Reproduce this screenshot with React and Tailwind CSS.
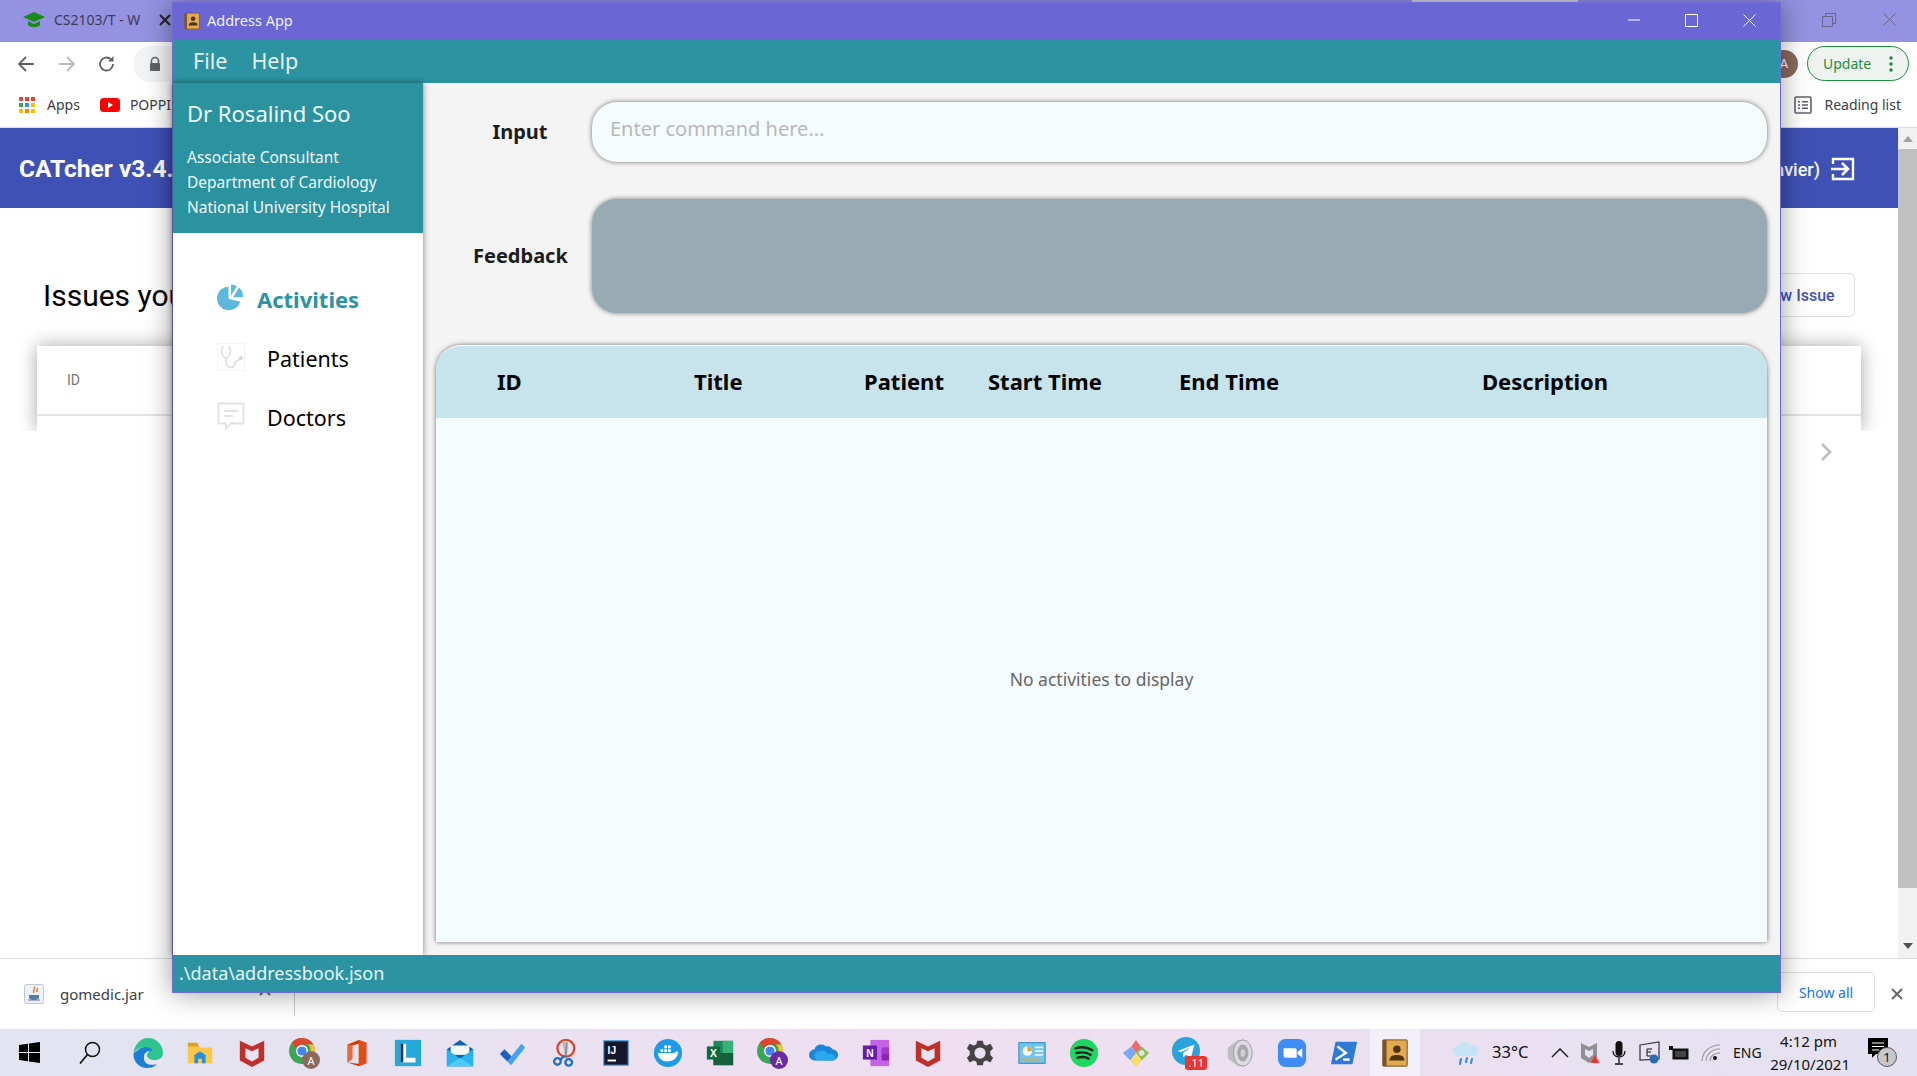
const SEGOE = "font-['Noto_Sans',sans-serif]";

function Svg({ s = 30, v = 32, children, className = "" }) {
  return (
    <svg width={s} height={s} viewBox={`0 0 ${v} ${v}`} className={className}>
      {children}
    </svg>
  );
}

const McAfee = ({ s = 30 }) => (
  <Svg s={s}>
    <path d="M3 3l13 6 13-6v21l-13 7-13-7z" fill="#c0302b" />
    <path d="M9 11l7 3 7-3v10l-7 4-7-4z" fill="#e6e4f0" />
  </Svg>
);

const ChromeA = ({ badge = "#8a6a5d", s = 34 }) => (
  <Svg s={s} v={34}>
    <circle cx="15" cy="15" r="13" fill="#3aa757" />
    <path d="M15 2a13 13 0 0 1 11.3 6.5H15a6.5 6.5 0 0 0-6 4L4.5 6.8A13 13 0 0 1 15 2z" fill="#e0452f" />
    <path d="M26.3 8.5A13 13 0 0 1 16 28l5-9a6.5 6.5 0 0 0 0-10.5z" fill="#fbc02d" />
    <circle cx="15" cy="15" r="6" fill="#fff" />
    <circle cx="15" cy="15" r="4.6" fill="#4285f4" />
    <circle cx="24" cy="24" r="9" fill={badge} />
    <text x="24" y="28.5" textAnchor="middle" fontSize="11" fill="#fff" fontFamily="Noto Sans">A</text>
  </Svg>
);

const taskIcons = [
  <Svg key="ex"><path d="M3 7h11l2 3h13v17H3z" fill="#fbc84a" /><path d="M3 5h10l2 4H3z" fill="#e0a021" /><path d="M10 27v-9l6-4 6 4v9h-4v-5h-4v5z" fill="#2a8fd8" /></Svg>,
  <McAfee key="mc" />,
  <ChromeA key="ch" />,
  <Svg key="of"><path d="M19 2l8 3v22l-8 3-12-4 12 1.5V6l-7 2v14l-5 4V7z" fill="#d83b01" /><path d="M7 7l5 1v14l-5 4z" fill="#eb6a3c" /><path d="M19 2l8 3v22l-8 3z" fill="#e04e17" /></Svg>,
  <Svg key="l"><rect x="2" y="2" width="28" height="28" fill="#25a9d8" /><path d="M8 6h6v15h10v5H8z" fill="#fff" /><path d="M8 6h3v20H8z" fill="#123a6b" /></Svg>,
  <Svg key="ml"><path d="M2 12L16 2l14 10v18H2z" fill="#0f64ad" /><path d="M6 8h20v10H6z" fill="#f4f8fb" /><path d="M2 12l14 10 14-10v18H2z" fill="#27b4ef" /><path d="M2 30l14-9 14 9z" fill="#4fcaf5" /></Svg>,
  <Svg key="td"><path d="M3 17l5-5 8 8-5 5z" fill="#1f5fbf" /><path d="M11 25L26 6l4 4-15 19z" fill="#43a3ee" /></Svg>,
  <Svg key="sn"><circle cx="18" cy="11" r="9" fill="none" stroke="#d9482b" strokeWidth="2.5" /><path d="M17 3l2 15-2 1-3-15z" fill="#b9b9b9" /><path d="M20 5l-1 14-2-1 1-14z" fill="#8a8a8a" /><circle cx="9" cy="25" r="3.5" fill="none" stroke="#1f6fc2" strokeWidth="2.5" /><circle cx="21" cy="26" r="3.5" fill="none" stroke="#1f6fc2" strokeWidth="2.5" /><path d="M11 22l5-4 2 1-5 5z" fill="#1f6fc2" /></Svg>,
  <Svg key="ij"><rect x="3" y="3" width="26" height="26" fill="#18162b" stroke="#3ea0dd" strokeWidth="1.2" /><text x="7" y="17" fontSize="11" fontWeight="700" fill="#fff" fontFamily="Liberation Sans">IJ</text><rect x="7" y="23" width="9" height="2" fill="#fff" /></Svg>,
  <Svg key="dk"><circle cx="16" cy="16" r="15" fill="#1d9be6" /><path d="M5 16h18c1-2 3-2 4-1-1 7-6 10-12 10-5 0-9-3-10-9z" fill="#fff" /><path d="M8 12h3v3H8zm4 0h3v3h-3zm4 0h3v3h-3zm-4-4h3v3h-3zm4 0h3v3h-3z" fill="#fff" /></Svg>,
  <Svg key="xl"><rect x="9" y="3" width="21" height="26" fill="#1f8a57" /><rect x="19" y="3" width="11" height="13" fill="#37b37a" /><rect x="9" y="16" width="21" height="13" fill="#155f3c" /><rect x="2" y="9" width="14" height="14" fill="#0f6b3a" /><text x="9" y="20" textAnchor="middle" fontSize="11" fontWeight="700" fill="#fff" fontFamily="Liberation Sans">X</text></Svg>,
  <ChromeA key="ch2" badge="#6a2aa6" />,
  <Svg key="od"><path d="M6 24a6 6 0 0 1 0-12c1-5 8-7 12-3 3-1 6 1 7 3a6 6 0 0 1 0 12z" fill="#1a86d9" /><path d="M10 24a5 5 0 0 1 2-10c3-1 6 0 8 3 4-1 9 1 8 5 0 1-1 2-3 2z" fill="#2ca7ec" /></Svg>,
  <Svg key="on"><rect x="10" y="2" width="20" height="28" fill="#c363e6" /><rect x="22" y="10" width="8" height="7" fill="#a23bcd" /><rect x="22" y="17" width="8" height="7" fill="#8a26b3" /><rect x="2" y="8" width="15" height="15" fill="#6a1ba6" /><text x="9.5" y="20" textAnchor="middle" fontSize="11" fontWeight="700" fill="#fff" fontFamily="Liberation Sans">N</text></Svg>,
  <McAfee key="mc2" />,
  <Svg key="gr"><path d="M13 3h6l1 4 3 1 4-2 3 5-3 3v4l3 3-3 5-4-2-3 1-1 4h-6l-1-4-3-1-4 2-3-5 3-3v-4l-3-3 3-5 4 2 3-1z" fill="#444" /><circle cx="16" cy="16" r="6" fill="#e8e0f0" /></Svg>,
  <Svg key="cp"><rect x="2" y="5" width="28" height="22" fill="#6ec6f0" stroke="#2b7fb8" /><circle cx="11" cy="14" r="5" fill="#fff" /><path d="M11 9a5 5 0 0 1 5 5h-5z" fill="#e9a33a" /><path d="M19 9h9v2h-9zm0 4h9v2h-9zm0 4h9v2h-9z" fill="#e8f6fc" /><rect x="5" y="22" width="20" height="2" fill="#e9a33a" /></Svg>,
  <Svg key="sp"><circle cx="16" cy="16" r="15" fill="#1ed760" /><path d="M7 11c6-2 13-1 18 2M8 16c5-1 11-1 15 2M9 21c4-1 9-1 12 1" stroke="#222" strokeWidth="2.6" fill="none" strokeLinecap="round" /></Svg>,
  <Svg key="gt"><path d="M16 2l6 9-6 5-5-7z" fill="#ef6a6a" /><path d="M2 16l9-7 5 7-6 8z" fill="#7aa9f5" /><path d="M22 9l8 7-8 8-6-8z" fill="#8cc152" /><path d="M10 24l6-8 6 8-6 7z" fill="#fbdc68" /><circle cx="22" cy="16" r="3" fill="#e8e0f0" /></Svg>,
  <div key="tg" className="relative w-[34px] h-[34px]">
    <Svg s={30}><circle cx="16" cy="16" r="15" fill="#2aa3dc" /><path d="M7 16l18-7-4 15-5-4-3 3v-5l8-6-10 5z" fill="#fff" /></Svg>
    <span className="absolute right-[-2px] bottom-0 bg-[#e8372f] text-white text-[11px] leading-[14px] px-[3px] rounded-[3px] font-['Noto_Sans',sans-serif]">.11</span>
  </div>,
  <Svg key="sd"><path d="M3 10l11-8h5v28h-5L3 22z" fill="#bdbdc2" /><ellipse cx="19" cy="16" rx="10" ry="14" fill="#dcdce0" stroke="#9a9a9e" /><ellipse cx="19" cy="16" rx="6" ry="9" fill="#a8a8ac" /><ellipse cx="19" cy="16" rx="2.5" ry="4" fill="#d0d0d4" /></Svg>,
  <Svg key="zm"><rect x="1" y="1" width="30" height="30" rx="8" fill="#3f8cf5" /><path d="M7 11h12a2 2 0 0 1 2 2v8H9a2 2 0 0 1-2-2z" fill="#fff" /><path d="M22 15l5-4v10l-5-4z" fill="#fff" /></Svg>,
  <Svg key="ps"><path d="M7 4h23l-5 24H2z" fill="#2f7ad6" /><path d="M9 9l9 7-11 7" fill="none" stroke="#fff" strokeWidth="2.5" /><path d="M15 23h7" stroke="#fff" strokeWidth="2.5" /></Svg>,
];

function AddressBook({ s = 28 }) {
  return (
    <Svg s={s}>
      <rect x="3" y="2" width="26" height="28" rx="1" fill="#e3a94f" stroke="#6d4a1e" />
      <rect x="3" y="2" width="4" height="28" fill="#7a5426" />
      <circle cx="18" cy="12" r="4" fill="#4d3413" />
      <path d="M10 24c0-5 4-6 8-6s8 1 8 6z" fill="#4d3413" />
    </Svg>
  );
}

function Pie({ s }) {
  return (
    <svg width={s} height={s} viewBox="0 0 28 28">
      <path d="M11.5 3.500v12.200l11.800 3A11.900 11.900 0 1 1 11.500 3.500z" fill="#5cb8dc" />
      <path d="M14 1.500a12 12 0 0 1 6 1.800l-6 9.200z" fill="#5cb8dc" />
      <path d="M22 4.600a12 12 0 0 1 4 9.500l-10 .3z" fill="#5cb8dc" />
    </svg>
  );
}

function AppWindow() {
  return (
    <div className={`absolute left-[172px] top-[2px] w-[1609px] h-[991px] flex flex-col border border-[#6f6cd8] bg-[#f4f4f4] shadow-[0_0_26px_rgba(0,0,0,0.4)] ${SEGOE}`}>
      <div className="h-[36px] bg-[#6a67d4] flex items-center pl-[10px] text-white shrink-0">
        <AddressBook s={18} />
        <span className="ml-[6px] text-[14.5px] text-[#f0f0ff]">Address App</span>
        <div className="ml-auto flex items-center mt-[-2px]">
          <svg width="14" height="14" viewBox="0 0 14 14" className="mr-[44px]"><path d="M1 7h12" stroke="#fff" /></svg>
          <svg width="13" height="13" viewBox="0 0 13 13" className="mr-[45px]"><rect x=".5" y=".5" width="12" height="12" fill="none" stroke="#fff" /></svg>
          <svg width="13" height="13" viewBox="0 0 13 13" className="mr-[24px]"><path d="M.5.5l12 12M12.5.5l-12 12" stroke="#fff" /></svg>
        </div>
      </div>
      <div className="h-[44px] bg-[#2b93a1] flex items-center pl-[20px] gap-[24px] text-[21.5px] text-[#e6f5f5] shrink-0">
        <span>File</span>
        <span>Help</span>
      </div>
      <div className="flex-1 flex min-h-0">
        <div className="w-[250px] shrink-0 bg-white shadow-[0_0_6px_rgba(0,0,0,0.5)] flex flex-col z-10">
          <div className="h-[150px] bg-[#2b92a0] pl-[14px] pr-[10px] pt-[14px] text-[#eef9f9]">
            <div className="text-[22px] leading-[32px]">Dr Rosalind Soo</div>
            <div className="mt-[16px] text-[15.5px] leading-[25px]">
              <div>Associate Consultant</div>
              <div>Department of Cardiology</div>
              <div>National University Hospital</div>
            </div>
          </div>
          <div className="flex flex-col pt-[50px] pl-[44px]">
            <div className="h-[60px] flex items-start">
              <Pie s={28} />
              <span className="ml-[12px] text-[22px] leading-[32px] font-bold text-[#2b93a1] whitespace-nowrap">Activities</span>
            </div>
            <div className="h-[59px] flex items-start">
              <svg width="28" height="28" viewBox="0 0 28 28">
                <rect x=".5" y=".5" width="27" height="27" fill="none" stroke="#f4f4f4" />
                <path d="M6 3C3 8 5 14 9 15c4-1 6-7 3-12M9 15v5c0 5 8 6 9 1v-2l5-3" fill="none" stroke="#e0e0e0" strokeWidth="1.6" />
                <circle cx="24" cy="15" r="2" fill="#d8d8d8" />
              </svg>
              <span className="ml-[22px] text-[21.5px] leading-[32px] text-black">Patients</span>
            </div>
            <div className="h-[59px] flex items-start">
              <svg width="28" height="28" viewBox="0 0 28 28">
                <path d="M1.5 1.5h25v20H14l-5 5v-5H1.5z" fill="none" stroke="#e2e2e2" strokeWidth="1.8" />
                <path d="M7 9h14M7 14h9" stroke="#e2e2e2" strokeWidth="2" />
              </svg>
              <span className="ml-[22px] text-[21.5px] leading-[32px] text-black">Doctors</span>
            </div>
          </div>
        </div>
        <div className="flex-1 flex flex-col min-w-0 pt-[19px] pl-[13px] pr-[13px] pb-[13px]">
          <div className="h-[60px] flex items-center shrink-0">
            <div className="w-[156px] pl-[12px] text-center font-bold text-[20px] text-[#1c1c1c]">Input</div>
            <div className="flex-1 h-full rounded-[25px] bg-[#f4fcfe] shadow-[0_0_5px_rgba(0,0,0,0.55)] pl-[18px] pt-[12px] text-[20px] leading-[30px] text-[#b9b9b9]">
              Enter command here...
            </div>
          </div>
          <div className="h-[114px] mt-[37px] flex items-center shrink-0">
            <div className="w-[156px] pl-[37px] whitespace-nowrap font-bold text-[20px] text-[#1c1c1c]">Feedback</div>
            <div className="flex-1 h-full rounded-[25px] bg-[#98aab3] shadow-[0_0_5px_rgba(0,0,0,0.5)]" />
          </div>
          <div className="mt-[32px] flex-1 flex flex-col rounded-tl-[25px] rounded-tr-[25px] bg-[#f4fcfe] shadow-[0_0_5px_rgba(0,0,0,0.55)] overflow-hidden border-t-[1px] border-white">
            <div className="h-[72px] shrink-0 bg-[#c7e3ec] grid grid-cols-[197px_170px_124px_191px_303px_1fr] items-center pl-[61px] pb-[2px] font-bold text-[22px] text-black whitespace-nowrap">
              <span>ID</span>
              <span>Title</span>
              <span>Patient</span>
              <span>Start Time</span>
              <span>End Time</span>
              <span>Description</span>
            </div>
            <div className="flex-1 flex items-center justify-center pb-[2px] text-[17.5px] text-[#666]">No activities to display</div>
          </div>
        </div>
      </div>
      <div className="h-[37px] shrink-0 bg-[#2b93a1] pl-[6px] flex items-center text-[18px] text-[#e6f5f5] z-10">.\data\addressbook.json</div>
    </div>
  );
}

function Browser() {
  return (
    <div className="h-[1029px] flex flex-col font-['Roboto',sans-serif]">
      <div className="h-[42px] shrink-0 bg-[#9492e1] flex items-center relative pb-[3px]">
        <svg width="22" height="16" viewBox="0 0 22 16" className="ml-[23px]"><path d="M11 0l11 5-11 5L0 5z" fill="#178a17" /><path d="M5 9v4c3 3 9 3 12 0V9l-6 3z" fill="#178a17" /></svg>
        <span className="ml-[9px] text-[14px] text-[#3b3b55] w-[100px] whitespace-nowrap font-['Noto_Sans',sans-serif]">CS2103/T - W</span>
        <svg width="12" height="12" viewBox="0 0 12 12" className="ml-[5px]"><path d="M1 1l10 10M11 1L1 11" stroke="#222" strokeWidth="2" /></svg>
        <div className="ml-auto flex items-center pr-[21px]">
          <svg width="14" height="14" viewBox="0 0 14 14" className="mr-[47px]"><path d="M.5 3.5h10v10H.5zM3.5 3.5v-3h10v10h-3" fill="none" stroke="#66668a" /></svg>
          <svg width="13" height="13" viewBox="0 0 13 13"><path d="M.5.5l12 12M12.5.5l-12 12" stroke="#66668a" /></svg>
        </div>
        <div className="absolute top-0 left-[1412px] w-[166px] h-[2px] bg-[#d8d6ea]" />
      </div>
      <div className="h-[43px] shrink-0 bg-white flex items-center text-[#5f6368]">
        <svg width="18" height="18" viewBox="0 0 18 18" className="ml-[17px]"><path d="M17 9H2M9 2L2 9l7 7" fill="none" stroke="#5f6368" strokeWidth="1.8" /></svg>
        <svg width="18" height="18" viewBox="0 0 18 18" className="ml-[23px]"><path d="M1 9h15M9 2l7 7-7 7" fill="none" stroke="#bcbcbc" strokeWidth="1.8" /></svg>
        <svg width="18" height="18" viewBox="0 0 18 18" className="ml-[22px]"><path d="M15 9a6.500 6.500 0 1 1-2-4.700" fill="none" stroke="#5f6368" strokeWidth="1.800" /><path d="M15.500 1v5.500H10z" fill="#5f6368" /></svg>
        <div className="ml-[17px] w-[200px] h-[36px] rounded-full bg-[#f1f3f4] flex items-center pl-[15px]">
          <svg width="14" height="16" viewBox="0 0 14 16"><path d="M3.5 7V5a3.5 3.5 0 0 1 7 0v2" fill="none" stroke="#5f6368" strokeWidth="1.6" /><rect x="2" y="7" width="10" height="8" rx="1" fill="#5f6368" /></svg>
        </div>
        <div className="ml-auto flex items-center pr-[8px]">
          <div className="w-[28px] h-[28px] rounded-full bg-[#8a6a5d] text-white text-[13px] flex items-center justify-center">A</div>
          <div className="ml-[9px] w-[102px] h-[35px] rounded-full border border-[#1e8e3e] bg-[#eef3ef] flex items-center pl-[15px] text-[14px] text-[#1e8e3e] font-['Noto_Sans',sans-serif]">
            Update
            <svg width="4" height="16" viewBox="0 0 4 16" className="ml-[18px]"><circle cx="2" cy="2" r="1.8" fill="#1e8e3e" /><circle cx="2" cy="8" r="1.8" fill="#1e8e3e" /><circle cx="2" cy="14" r="1.8" fill="#1e8e3e" /></svg>
          </div>
        </div>
      </div>
      <div className="h-[43px] shrink-0 bg-white border-b border-[#dadada] flex items-center pb-[3px] text-[14px] text-[#3c4043] font-['Noto_Sans',sans-serif]">
        <div className="ml-[19px] grid grid-cols-3 gap-[2px] w-[16px]">
          {["#ea4335", "#ea4335", "#ea4335", "#34a853", "#4285f4", "#fbbc04", "#fbbc04", "#ea8600", "#fbbc04"].map((c, i) => (
            <span key={i} className="h-[4px] w-[4px]" style={{ backgroundColor: c }} />
          ))}
        </div>
        <span className="ml-[12px]">Apps</span>
        <svg width="20" height="14" viewBox="0 0 20 14" className="ml-[20px]"><rect width="20" height="14" rx="3.5" fill="#f00" /><path d="M8 4l5 3-5 3z" fill="#fff" /></svg>
        <span className="ml-[10px]">POPPI</span>
        <svg width="18" height="18" viewBox="0 0 18 18" className="ml-auto"><rect x="1" y="1" width="16" height="16" rx="1" fill="#fff" stroke="#5f6368" strokeWidth="1.6" /><path d="M4 5h2v1.5H4zM8 5h6v1.5H8zM4 8.3h2v1.5H4zM8 8.3h6v1.5H8zM4 11.6h2v1.5H4zM8 11.6h6v1.5H8z" fill="#5f6368" /></svg>
        <span className="ml-[12px] mr-[16px] text-[#3c4043]">Reading list</span>
      </div>
      <div className="flex-1 flex min-h-0">
        <div className="flex-1 flex flex-col min-w-0 bg-white">
          <div className="h-[80px] shrink-0 bg-[#3f51b5] flex items-center px-[19px] pt-[2px] text-white font-medium">
            <span className="text-[24.5px] font-bold">CATcher v3.4.1</span>
            <span className="ml-auto text-[18px]">(Xavier)</span>
            <svg width="26" height="26" viewBox="0 0 26 26" className="ml-[10px] mr-[23px]"><path d="M3 8V3h20v20H3v-5" fill="none" stroke="#fff" strokeWidth="2.4" /><path d="M1 13h16M12 7l6 6-6 6" fill="none" stroke="#fff" strokeWidth="2.6" /></svg>
          </div>
          <div className="h-[65px] shrink-0" />
          <div className="h-[44px] shrink-0 flex items-center pl-[43px] pr-[43px]">
            <span className="text-[30px] text-black">Issues you have posted</span>
            <div className="ml-auto w-[115px] h-full rounded-[5px] border border-[#e0e0e0] flex items-center justify-center pt-[1px] text-[16px] font-medium text-[#3f51b5]">New Issue</div>
          </div>
          <div className="h-[29px] shrink-0" />
          <div className="mx-[37px] h-[85px] shrink-0 bg-white shadow-[0_0_18px_rgba(0,0,0,0.35)]">
            <div className="h-[70px] border-b-2 border-[#e4e4e4] flex items-center pl-[30px] text-[14px] text-[#757575]">ID</div>
          </div>
          <div className="relative flex-1 bg-white">
            <svg width="12" height="20" viewBox="0 0 12 20" className="absolute right-[66px] top-[11px]"><path d="M2 2l8 8-8 8" fill="none" stroke="#bdbdbd" strokeWidth="2.6" /></svg>
          </div>
        </div>
        <div className="w-[19px] shrink-0 bg-[#f1f1f1] flex flex-col">
          <div className="h-[21px] flex items-center justify-center"><svg width="10" height="6" viewBox="0 0 10 6"><path d="M0 6l5-6 5 6z" fill="#a3a3a3" /></svg></div>
          <div className="h-[739px] bg-[#c1c1c1]" />
          <div className="flex-1 flex items-end justify-center pb-[9px]"><svg width="10" height="6" viewBox="0 0 10 6"><path d="M0 0l5 6 5-6z" fill="#505050" /></svg></div>
        </div>
      </div>
      <div className="h-[71px] shrink-0 bg-white border-t border-[#dadada] flex items-center font-['Noto_Sans',sans-serif]">
        <svg width="20" height="20" viewBox="0 0 20 20" className="ml-[24px]"><rect x=".5" y=".5" width="19" height="19" rx="2" fill="#eef1f6" stroke="#bfc6d2" /><path d="M10 3c2 2-2 3 0 6M13 4c1 2-1 2 0 4" stroke="#d86f1c" fill="none" strokeWidth="1.3" /><path d="M5 11h10v3c-2 3-8 3-10 0z" fill="#5a7fa6" /><path d="M4 16h12" stroke="#5a7fa6" /></svg>
        <span className="ml-[16px] text-[15px] text-[#3c4043] w-[150px]">gomedic.jar</span>
        <svg width="12" height="8" viewBox="0 0 12 8" className="ml-[49px] mb-[4px]"><path d="M1 7l5-5 5 5" fill="none" stroke="#5f6368" strokeWidth="1.8" /></svg>
        <div className="ml-[23px] h-[56px] w-px bg-[#c8c8c8] self-start mt-[1px]" />
        <div className="ml-auto w-[98px] h-[40px] rounded-[5px] border border-[#e0e0e0] flex items-center justify-center text-[14px] text-[#1a73e8] mt-[-4px]">Show all</div>
        <svg width="12" height="12" viewBox="0 0 12 12" className="ml-[16px] mr-[14px]"><path d="M1 1l10 10M11 1L1 11" stroke="#666" strokeWidth="2" /></svg>
      </div>
    </div>
  );
}

function Taskbar() {
  return (
    <div className="h-[47px] shrink-0 flex items-center bg-gradient-to-r from-[#e2e4f1] via-[#efdff0] to-[#e4e2f0] font-['Noto_Sans',sans-serif] text-[#111]">
      <div className="w-[58px] flex justify-center">
        <svg width="21" height="21" viewBox="0 0 21 21"><path d="M0 3l9-1.3V10H0zM10 1.5L21 0v10H10zM0 11h9v8.300L0 18zM10 11h11v10l-11-1.500z" fill="#000" /></svg>
      </div>
      <div className="w-[64px] flex justify-center">
        <svg width="22" height="24" viewBox="0 0 22 24"><circle cx="13.500" cy="8.500" r="7" fill="none" stroke="#111" strokeWidth="1.500" /><path d="M8.500 13.500L1 22.500" stroke="#111" strokeWidth="1.700" /></svg>
      </div>
      <div className="w-[52px] flex justify-center">
        <svg width="32" height="32" viewBox="0 0 32 32">
          <path d="M16 1a15 15 0 0 1 15 15c0 5-4 7-8 7-5 0-8-2-8-5 0-2 2-3 2-4 0-3-5-5-9-3C4 13 2 15 1.500 17 2 8 8 1 16 1z" fill="#2fc48d" />
          <path d="M1.500 17C1 25 8 31 15 31c4 0 7-1 10-4-6 2-14 1-13-8 .5-4 5-6 9-5-3-5-11-5-15-1-2 1-4 3-4.500 4z" fill="#1a7fd4" />
        </svg>
      </div>
      {taskIcons.map((ic, i) => (
        <div key={i} className="w-[52px] h-[47px] flex items-center justify-center shrink-0">{ic}</div>
      ))}
      <div className="w-[50px] h-[47px] flex items-center justify-center bg-[#f3eff8] shrink-0"><AddressBook s={30} /></div>
      <div className="ml-[28px] w-[36px] flex justify-center">
        <svg width="30" height="28" viewBox="0 0 30 28"><path d="M7 17a5 5 0 0 1 0-10c2-5 11-5 13-1 5-1 8 3 7 6a5 5 0 0 1-3 5z" fill="#c5e3f5" /><path d="M10 20l-1 5M16 19l-1 4M21 20l-1 4" stroke="#3f8fd0" strokeWidth="2.200" strokeLinecap="round" /></svg>
      </div>
      <span className="ml-[8px] w-[40px] text-[16.5px] whitespace-nowrap">33°C</span>
      <svg width="18" height="10" viewBox="0 0 18 10" className="ml-[19px]"><path d="M1 9l8-8 8 8" fill="none" stroke="#111" strokeWidth="1.300" /></svg>
      <svg width="20" height="22" viewBox="0 0 20 22" className="ml-[11px]"><path d="M1 1l8 4 8-4v15l-8 5-8-5z" fill="#8f8f94" /><path d="M5 7l4 2 4-2v6l-4 3-4-3z" fill="#e4e2f0" /><path d="M15 13l4.500 8h-9z" fill="#e33" /></svg>
      <svg width="14" height="24" viewBox="0 0 14 24" className="ml-[12px]"><rect x="3.500" y="0" width="7" height="15" rx="3.500" fill="#111" /><path d="M1 10c0 8 12 8 12 0M7 17v5M3 23h8" fill="none" stroke="#111" strokeWidth="1.300" /></svg>
      <svg width="22" height="24" viewBox="0 0 22 24" className="ml-[13px]"><path d="M1 4l19-3v17l-19 1z" fill="none" stroke="#333" strokeWidth="1.200" /><path d="M8 8h5M8 8v7h5M8 11h4" stroke="#111" fill="none" /><circle cx="15" cy="18" r="4.500" fill="#2b6cb8" /></svg>
      <svg width="20" height="14" viewBox="0 0 20 14" className="ml-[8px]"><rect x="4" y="3" width="15" height="10" fill="#111" stroke="#111" /><rect x="0" y="0" width="4" height="4" fill="#111" /><rect x="6" y="5" width="11" height="6" fill="#444" /></svg>
      <svg width="20" height="18" viewBox="0 0 20 18" className="ml-[12px]"><path d="M1 17C1 9 8 1 19 1M5 17c0-6 5-12 14-12M9 17c0-4 3-8 10-8" fill="none" stroke="#999" strokeWidth="1.100" /><circle cx="14" cy="14" r="2" fill="#111" /></svg>
      <span className="ml-[12px] w-[30px] text-[14px]">ENG</span>
      <div className="ml-[11px] w-[76px] flex flex-col items-end text-[15px] leading-[23px]">
        <span className="pr-[13px] whitespace-nowrap">4:12 pm</span>
        <span className="whitespace-nowrap">29/10/2021</span>
      </div>
      <div className="relative ml-[18px] w-[26px] h-[30px]">
        <svg width="20" height="20" viewBox="0 0 20 20"><path d="M0 0h20v16H8l-4 4v-4H0z" fill="#000" /><path d="M4 5h12M4 8.500h12M4 12h7" stroke="#fff" /></svg>
        <span className="absolute left-[9px] top-[9px] w-[20px] h-[20px] rounded-full bg-[#c8c8cc] border border-[#555] text-[13px] leading-[18px] text-center">1</span>
      </div>
    </div>
  );
}

export default function App() {
  return (
    <div className="relative w-screen h-screen overflow-hidden bg-white flex flex-col">
      <Browser />
      <Taskbar />
      <AppWindow />
    </div>
  );
}
